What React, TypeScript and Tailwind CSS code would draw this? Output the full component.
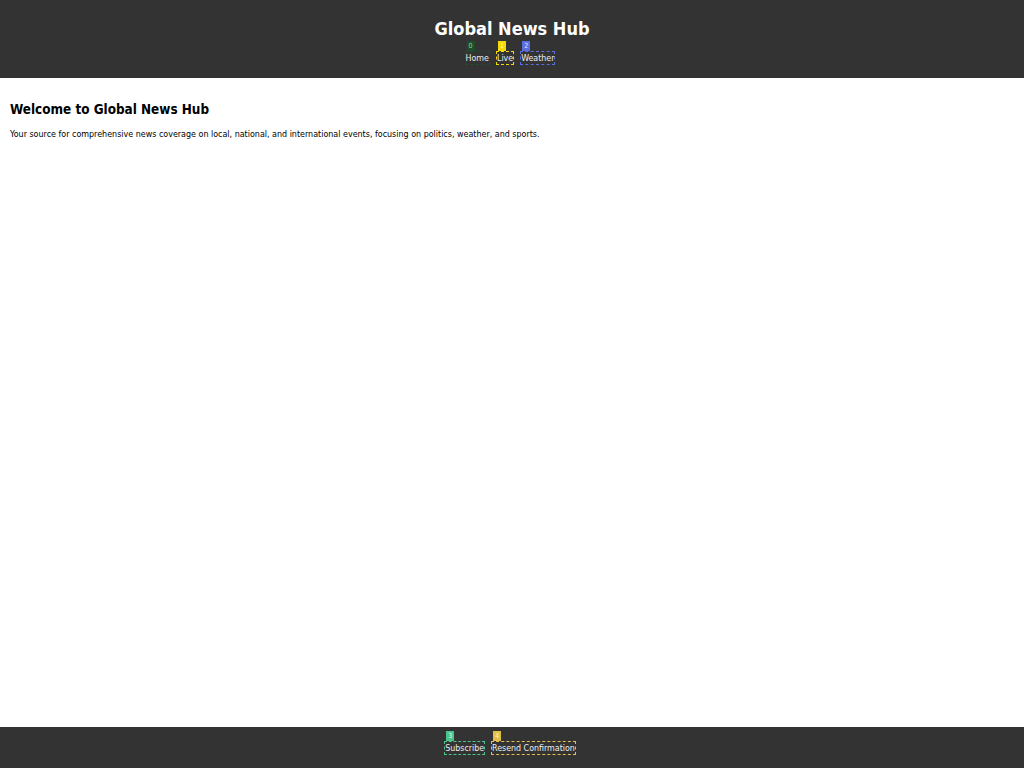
import React from 'react';

const font = { fontFamily: '"DejaVu Sans Condensed", "DejaVu Sans", sans-serif' };

function Tag({ n, label, box, badge }: { n: number; label: string; box: string; badge: string }) {
  return (
    <span className={`relative inline-block border border-dashed leading-[12px] ${box}`}>
      <span className={`absolute left-[1px] top-[-11px] w-[8px] h-[10px] text-center text-[7px] leading-[10px] ${badge}`}>{n}</span>
      {label}
    </span>
  );
}

export default function App() {
  return (
    <div className="min-h-screen flex flex-col bg-white" style={font}>
      <header className="bg-[#333333] text-white h-[78px] flex flex-col items-center pt-[18px]">
        <h1 className="text-[18px] font-bold leading-[21px]">Global News Hub</h1>
        <nav className="flex gap-[6px] text-[8.8px] mt-[12px] pr-[4px] text-[#eeeeee]">
          <Tag n={0} label="Home" box="border-[#1f4d2b]" badge="bg-[#1f4d2b] text-[#7fd39a]" />
          <Tag n={1} label="Live" box="border-[#f5d90a]" badge="bg-[#f5d90a] text-[#fff7a0]" />
          <Tag n={2} label="Weather" box="border-[#5b6fe0]" badge="bg-[#5b6fe0] text-[#dfe3ff]" />
        </nav>
      </header>

      <main className="flex-1 px-[10px] pt-[23px]">
        <h2 className="text-[13.4px] font-bold leading-[17px] text-black">Welcome to Global News Hub</h2>
        <p className="text-[8.9px] leading-[11px] mt-[11px] text-black">
          Your source for comprehensive news coverage on local, national, and international events, focusing on politics, weather, and sports.
        </p>
      </main>

      <footer className="bg-[#333333] text-[#eeeeee] h-[41px] flex justify-center items-start pt-[14px] pr-[4px] gap-[6px] text-[8.8px]">
        <Tag n={3} label="Subscribe" box="border-[#4cc38a]" badge="bg-[#4cc38a] text-[#d6ffe9]" />
        <Tag n={4} label="Resend Confirmation" box="border-[#e0c04a]" badge="bg-[#e0c04a] text-[#fff3c0]" />
      </footer>
    </div>
  );
}
